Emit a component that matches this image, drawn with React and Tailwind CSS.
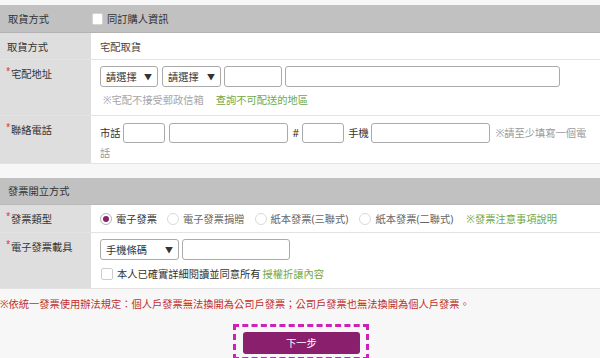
import React from "react";

function Label({ children, required }) {
  return (
    <div className="w-[91px] shrink-0 bg-[#dedede] pt-[7px] pl-[7px] text-[#333]">
      {required ? (
        <span className="relative">
          <span className="absolute left-[-1px] top-[-3px] text-[8px] text-[#d33]">*</span>
          <span className="pl-[4px]">{children}</span>
        </span>
      ) : (
        children
      )}
    </div>
  );
}

function Select({ text, w }) {
  return (
    <div
      className={`flex items-center justify-between h-[21px] border border-[#aaa] rounded-[3px] bg-white pl-[5px] pr-[5px] text-[#333] ${w}`}
    >
      <span>{text}</span>
      <span className="text-[8px]">▼</span>
    </div>
  );
}

function Radio({ checked, label, className }) {
  return (
    <div className={`flex items-center ${className}`}>
      <span
        className={`flex items-center justify-center w-[12px] h-[12px] rounded-full border bg-white ${
          checked ? "border-[#b5b5b5]" : "border-[#dadada]"
        }`}
      >
        {checked && <span className="w-[6px] h-[6px] rounded-full bg-[#8b2070]" />}
      </span>
      <span className={`ml-[4px] ${checked ? "text-[#333]" : "text-[#666]"}`}>{label}</span>
    </div>
  );
}

export default function App() {
  return (
    <div className="w-[600px] h-[358px] overflow-hidden bg-[#f7f7f7] text-[10.25px] leading-[14px] text-[#333] font-['Noto_Sans','Noto_Sans_CJK_TC',sans-serif] pt-[5px]">
      {/* header 1 */}
      <div className="flex items-center h-[28px] bg-[#c1c1c1] border-b border-[#b2b2b2]">
        <div className="w-[92px] pl-[8px]">取貨方式</div>
        <div className="flex items-center">
          <span className="w-[11px] h-[12px] bg-white rounded-[2px] border border-[#d5d5d5]" />
          <span className="ml-[4px]">同訂購人資訊</span>
        </div>
      </div>

      {/* row 取貨方式 */}
      <div className="flex h-[27px] border-b border-[#e3e3e3]">
        <Label>取貨方式</Label>
        <div className="flex-1 bg-white pt-[7px] pl-[9px] text-[#444]">宅配取貨</div>
      </div>

      {/* row 宅配地址 */}
      <div className="flex h-[56px] border-b border-[#e3e3e3]">
        <Label required>宅配地址</Label>
        <div className="flex-1 bg-white pt-[6px] pl-[9px]">
          <div className="flex">
            <Select text="請選擇" w="w-[58px]" />
            <div className="ml-[4px]">
              <Select text="請選擇" w="w-[59px]" />
            </div>
            <div className="ml-[3px] w-[58px] h-[21px] border border-[#aaa] rounded-[3px] bg-white" />
            <div className="ml-[3px] w-[275px] h-[21px] border border-[#aaa] rounded-[3px] bg-white" />
          </div>
          <div className="mt-[6px] flex">
            <span className="ml-[3px] text-[#a5a5a5]">※宅配不接受郵政信箱</span>
            <span className="ml-[12px] text-[#6fa84a]">查詢不可配送的地區</span>
          </div>
        </div>
      </div>

      {/* row 聯絡電話 */}
      <div className="flex h-[48px] border-b border-[#e3e3e3]">
        <Label required>聯絡電話</Label>
        <div className="flex-1 bg-white pt-[7px] pl-[9px] pr-[9px] leading-[20px] text-[#999]">
          <span className="text-[#333]">市話</span>
          <span className="inline-block align-top ml-[2px] w-[42px] h-[20px] border border-[#aaa] rounded-[3px] bg-white" />
          <span className="inline-block align-top ml-[4px] w-[119px] h-[20px] border border-[#aaa] rounded-[3px] bg-white" />
          <span className="ml-[5px] text-[#333]">#</span>
          <span className="inline-block align-top ml-[3px] w-[42px] h-[20px] border border-[#aaa] rounded-[3px] bg-white" />
          <span className="ml-[4px] text-[#333]">手機</span>
          <span className="inline-block align-top ml-[2px] w-[119px] h-[20px] border border-[#aaa] rounded-[3px] bg-white mr-[6px]" />
          ※請至少填寫一個電話
        </div>
      </div>

      <div className="h-[14px]" />

      {/* header 2 */}
      <div className="flex items-center h-[27px] bg-[#c1c1c1] border-b border-[#b8b8b8] pl-[8px]">
        發票開立方式
      </div>

      {/* row 發票類型 */}
      <div className="flex h-[28px] border-b border-[#e3e3e3]">
        <Label required>發票類型</Label>
        <div className="flex-1 bg-white flex items-center pl-[9px]">
          <Radio checked label="電子發票" />
          <Radio label="電子發票捐贈" className="ml-[10px]" />
          <Radio label="紙本發票(三聯式)" className="ml-[10px]" />
          <Radio label="紙本發票(二聯式)" className="ml-[11px]" />
          <span className="ml-[13px] text-[#6fa84a]">※發票注意事項說明</span>
        </div>
      </div>

      {/* row 電子發票載具 */}
      <div className="flex h-[56px] border-b border-[#e3e3e3]">
        <Label required>電子發票載具</Label>
        <div className="flex-1 bg-white pt-[6px] pl-[9px]">
          <div className="flex">
            <Select text="手機條碼" w="w-[79px]" />
            <div className="ml-[3px] w-[108px] h-[21px] border border-[#aaa] rounded-[3px] bg-white" />
          </div>
          <div className="mt-[7px] flex items-center">
            <span className="ml-[1px] w-[12px] h-[12px] bg-white rounded-[2px] border border-[#ccc]" />
            <span className="ml-[4px]">本人已確實詳細閱讀並同意所有</span>
            <span className="ml-[2px] text-[#6fa84a]">授權折讓內容</span>
          </div>
        </div>
      </div>

      {/* note */}
      <div className="mt-[8px] text-[#c0302c]">
        ※依統一發票使用辦法規定：個人戶發票無法換開為公司戶發票；公司戶發票也無法換開為個人戶發票。
      </div>

      {/* button */}
      <div className="mt-[13px] flex justify-center pl-[2px]">
        <div className="border-[3px] border-dashed border-[#cc22bb] pt-[5px] pb-[3px] pl-[7px] pr-[6px]">
          <div className="w-[117px] h-[22px] bg-[#8a1f6e] rounded-[3px] flex items-center justify-center text-white">
            下一步
          </div>
        </div>
      </div>
    </div>
  );
}
